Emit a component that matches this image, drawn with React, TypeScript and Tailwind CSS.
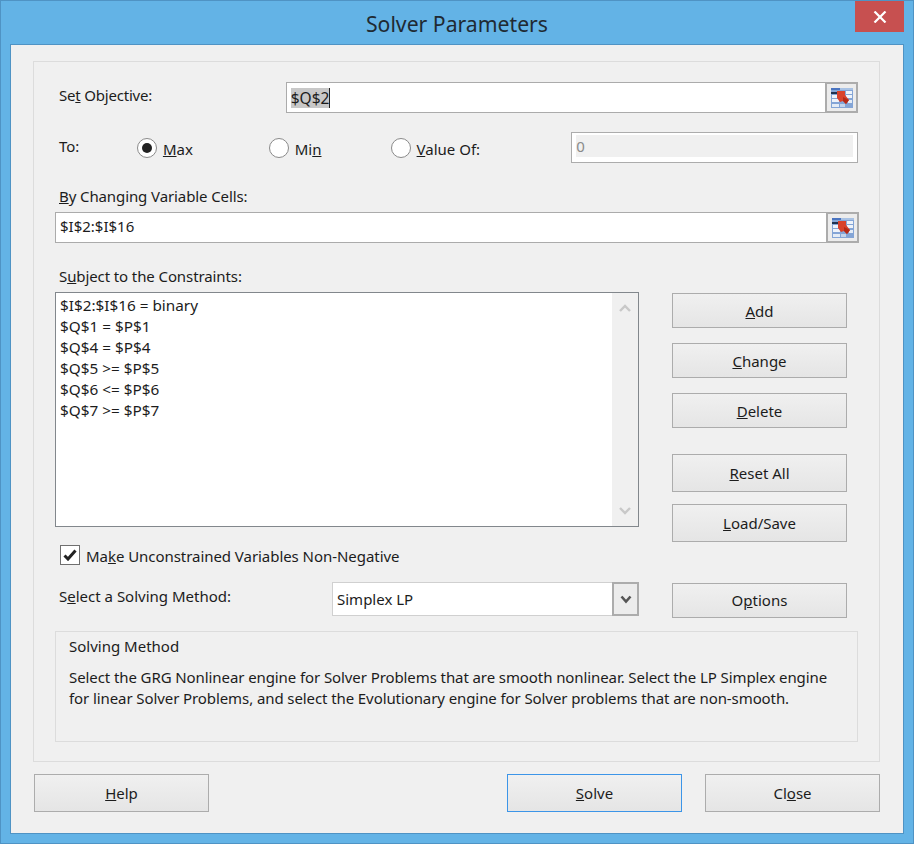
import type { ReactNode } from 'react';

const FONT = 'font-["Noto_Sans","Open_Sans",sans-serif]';

function RefIcon() {
  return (
    <svg width="22" height="20" viewBox="0 0 22 20" className="block">
      <rect x="0" y="0" width="22" height="20" fill="#84a5d6" />
      <rect x="0" y="0" width="9" height="2" fill="#4a74c0" />
      <rect x="9" y="0" width="13" height="2" fill="#a9c2e4" />
      <rect x="0" y="4" width="8" height="2" fill="#1f3350" />
      <rect x="1" y="7" width="7" height="3" fill="#eef3fa" />
      <rect x="1" y="11" width="7" height="3" fill="#eef3fa" />
      <rect x="1" y="16" width="7" height="3" fill="#e4ecf6" />
      <rect x="15" y="3" width="6" height="3" fill="#eef3fa" />
      <rect x="15" y="7" width="6" height="3" fill="#eef3fa" />
      <rect x="17" y="12" width="4" height="3" fill="#e4ecf6" />
      <rect x="9" y="16" width="5" height="3" fill="#c3d4ec" />
      <path d="M6 3h8v4l4 5-3 4-3-3-3 1-3-4z" fill="#d8422c" />
      <path d="M12 9l6 3-3 4-3-3z" fill="#b42a18" />
    </svg>
  );
}

function RefField({ children, width }: { children: ReactNode; width: string }) {
  return (
    <div className={`flex h-[31px] ${width}`}>
      <div className="flex-1 flex items-center bg-white border border-[#ababab] border-r-0 pl-1">{children}</div>
      <div className="w-[33px] flex items-center justify-center border-2 border-[#acacac] bg-[#ececec]">
        <RefIcon />
      </div>
    </div>
  );
}

function Radio({ checked, className, children }: { checked?: boolean; className: string; children: ReactNode }) {
  return (
    <div className={`flex items-center ${className}`}>
      <span className="w-5 h-5 rounded-full border border-[#8a8a8a] bg-white flex items-center justify-center">
        {checked && <span className="w-[10px] h-[10px] rounded-full bg-[#222222]" />}
      </span>
      <span className="ml-[6px] mt-[3px]">{children}</span>
    </div>
  );
}

function Btn({ children, className = '', focused }: { children: ReactNode; className?: string; focused?: boolean }) {
  return (
    <button
      className={`w-[175px] flex items-center justify-center border bg-gradient-to-b from-[#f0f0f0] to-[#e5e5e5] ${
        focused ? 'border-[#3c95e8]' : 'border-[#acacac]'
      } ${className}`}
    >
      {children}
    </button>
  );
}

const constraints = [
  '$I$2:$I$16 = binary',
  '$Q$1 = $P$1',
  '$Q$4 = $P$4',
  '$Q$5 >= $P$5',
  '$Q$6 <= $P$6',
  '$Q$7 >= $P$7',
];

export default function App() {
  return (
    <div className={`${FONT} w-[914px] h-[844px] bg-[#63b3e6] border border-[#4f93c4] flex flex-col text-[#1c1c1c] text-[15px] leading-[20px] overflow-hidden`}>
      {/* Title bar */}
      <div className="relative h-[43px] shrink-0 flex justify-center pt-[9px]">
        <span className="text-[21.2px] leading-[28px] text-[#1f2a33]">Solver Parameters</span>
        <div className="absolute top-0 right-[9px] w-[49px] h-[31px] bg-[#c75050] flex items-center justify-center">
          <svg width="14" height="12" viewBox="0 0 14 12">
            <path d="M1.5 0.5L12.5 11.5M12.5 0.5L1.5 11.5" stroke="#ffffff" strokeWidth="2.2" />
          </svg>
        </div>
      </div>

      {/* Dialog body */}
      <div className="ml-[9px] w-[894px] h-[790px] bg-[#f0f0f0] border border-[#4f93c4] pt-[16px] pl-[22px]">
        <div className="w-[847px] h-[701px] border border-[#dcdcdc] pl-[21px] pr-[21px]">
          {/* Objective */}
          <div className="flex items-center mt-[20px] h-[31px]">
            <span className="ml-[4px] w-[227px] -mt-[6px] tracking-[-0.2px]">Se<u>t</u> Objective:</span>
            <RefField width="w-[573px]">
              <span className="bg-[#c8c8c8] border-r border-[#222222] text-[15.5px]">$Q$2</span>
            </RefField>
          </div>

          {/* To */}
          <div className="flex items-center mt-[19px] h-[31px]">
            <span className="ml-[4px] w-[78px] -mt-[3px]">To:</span>
            <Radio checked className="w-[132px]"><u>M</u>ax</Radio>
            <Radio className="w-[122px]">Mi<u>n</u></Radio>
            <Radio className="w-[181px]"><u>V</u>alue Of:</Radio>
            <div className="w-[287px] h-[31px] border border-[#acacac] bg-white px-1 pt-[2px] pb-[5px]">
              <div className="h-full bg-[#f0f0f0] flex items-center text-[#8a8a8a]">0</div>
            </div>
          </div>

          {/* Changing cells */}
          <div className="ml-[4px] mt-[23px] tracking-[-0.1px]"><u>B</u>y Changing Variable Cells:</div>
          <div className="mt-[6px]">
            <RefField width="w-[804px]">
              <span className="-mt-[3px]">$I$2:$I$16</span>
            </RefField>
          </div>

          {/* Constraints */}
          <div className="ml-[4px] mt-[23px] tracking-[-0.1px]">S<u>u</u>bject to the Constraints:</div>
          <div className="flex mt-[6px] h-[235px]">
            <div className="w-[584px] h-[235px] border border-[#82878c] bg-white flex justify-between">
              <div className="pl-1 pt-[2px] leading-[20.9px] text-[15.3px]">
                {constraints.map((c) => (
                  <div key={c}>{c}</div>
                ))}
              </div>
              <div className="w-[26px] bg-[#f0f0f0] flex flex-col items-center justify-between py-[11px]">
                <svg width="12" height="8" viewBox="0 0 12 8"><path d="M1 7L6 2L11 7" fill="none" stroke="#c8c8c8" strokeWidth="2.4" /></svg>
                <svg width="12" height="8" viewBox="0 0 12 8"><path d="M1 1L6 6L11 1" fill="none" stroke="#c8c8c8" strokeWidth="2.4" /></svg>
              </div>
            </div>
            <div className="ml-[33px] flex flex-col pt-[1px]">
              <Btn className="h-[35px] shrink-0"><span><u>A</u>dd</span></Btn>
              <Btn className="h-[35px] shrink-0 mt-[15px]"><span><u>C</u>hange</span></Btn>
              <Btn className="h-[35px] shrink-0 mt-[15px]"><span><u>D</u>elete</span></Btn>
              <Btn className="h-[38px] shrink-0 mt-[26px]"><span><u>R</u>eset All</span></Btn>
              <Btn className="h-[38px] shrink-0 mt-[12px]"><span><u>L</u>oad/Save</span></Btn>
            </div>
          </div>

          {/* Non-negative checkbox */}
          <div className="flex items-center mt-[18px] ml-[5px] h-[20px]">
            <span className="w-5 h-5 border border-[#6f6f6f] bg-white flex items-center justify-center">
              <svg width="14" height="12" viewBox="0 0 14 12"><path d="M1.5 6.5L5 10L12.5 1.5" fill="none" stroke="#222222" strokeWidth="3" /></svg>
            </span>
            <span className="ml-[6px] mt-[2px] tracking-[-0.05px]">Ma<u>k</u>e Unconstrained Variables Non-Negative</span>
          </div>

          {/* Solving method select */}
          <div className="flex items-center mt-[17px] h-[34px]">
            <span className="ml-[4px] w-[273px] -mt-[6px]">S<u>e</u>lect a Solving Method:</span>
            <div className="w-[307px] h-[34px] flex">
              <div className="flex-1 bg-white border border-[#d0d0d0] border-r-0 pl-1 flex items-center">Simplex LP</div>
              <div className="w-[27px] border-2 border-[#acacac] bg-[#ececec] flex items-center justify-center">
                <svg width="12" height="9" viewBox="0 0 12 9"><path d="M1.5 1.5L6 6.5L10.500 1.5" fill="none" stroke="#555555" strokeWidth="2.6" /></svg>
              </div>
            </div>
            <Btn className="h-[35px] ml-[33px] mt-[2px]"><span>O<u>p</u>tions</span></Btn>
          </div>

          {/* Description */}
          <div className="w-[803px] h-[111px] mt-[15px] border border-[#dcdcdc] pl-[13px] pr-[13px] pt-[4px]">
            <div>Solving Method</div>
            <div className="mt-[11px] leading-[21px] tracking-[-0.09px]">
              Select the GRG Nonlinear engine for Solver Problems that are smooth nonlinear. Select the LP Simplex engine for linear Solver Problems, and select the Evolutionary engine for Solver problems that are non-smooth.
            </div>
          </div>
        </div>

        {/* Footer buttons */}
        <div className="flex mt-[12px] w-[847px]">
          <Btn className="h-[38px] ml-[1px]"><span><u>H</u>elp</span></Btn>
          <Btn focused className="h-[38px] ml-[298px]"><span><u>S</u>olve</span></Btn>
          <Btn className="h-[38px] ml-[23px]"><span>Cl<u>o</u>se</span></Btn>
        </div>
      </div>
    </div>
  );
}
